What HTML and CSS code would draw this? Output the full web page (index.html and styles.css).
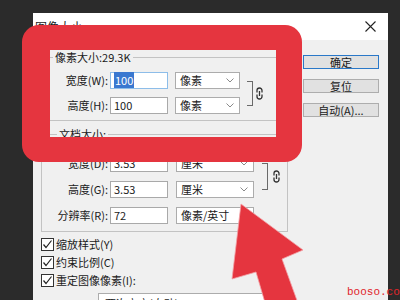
FILE: index.html
```html
<!DOCTYPE html>
<html lang="zh-CN">
<head>
  <meta charset="UTF-8">
  <title>图像大小</title>
  <link rel="stylesheet" href="styles.css">
</head>
<body>
  <div class="screen">
    <div class="dialog">
      <div class="titlebar">
        <span class="title">图像大小</span>
        <svg class="close" width="11" height="11" viewBox="0 0 11 11">
          <path d="M0.5 0.5 L10.5 10.5 M10.5 0.5 L0.5 10.5" stroke="#222" stroke-width="1.1" fill="none"/>
        </svg>
      </div>

      <div class="dialog-body">
        <div class="main">
          <fieldset class="group group-pixels">
            <legend>像素大小:29.3K</legend>
            <div class="rows">
              <label class="label">宽度(W):</label>
              <div class="field focused"><span class="selected">100</span></div>
              <div class="combo">像素
                <svg width="8" height="5" viewBox="0 0 8 5"><polyline points="0.5,0.5 4,4 7.5,0.5" stroke="#8a8a8a" fill="none"/></svg>
              </div>
              <div class="link">
                <div class="bracket"></div>
                <svg class="chain" width="7" height="13" viewBox="0 0 7 13">
                  <path d="M1 5.5 V3.5 a2.5 2.5 0 0 1 5 0 V5.5 M1 7.5 v2 a2.5 2.5 0 0 0 5 0 V7.5 M3.5 4 v5" stroke="#333" stroke-width="1.3" fill="none"/>
                </svg>
              </div>

              <label class="label">高度(H):</label>
              <div class="field">100</div>
              <div class="combo">像素
                <svg width="8" height="5" viewBox="0 0 8 5"><polyline points="0.5,0.5 4,4 7.5,0.5" stroke="#8a8a8a" fill="none"/></svg>
              </div>
            </div>
          </fieldset>

          <fieldset class="group group-doc">
            <legend>文档大小:</legend>
            <div class="rows">
              <label class="label">宽度(D):</label>
              <div class="field">3.53</div>
              <div class="combo">厘米
                <svg width="8" height="5" viewBox="0 0 8 5"><polyline points="0.5,0.5 4,4 7.5,0.5" stroke="#8a8a8a" fill="none"/></svg>
              </div>
              <div class="link">
                <div class="bracket"></div>
                <svg class="chain" width="7" height="13" viewBox="0 0 7 13">
                  <path d="M1 5.5 V3.5 a2.5 2.5 0 0 1 5 0 V5.5 M1 7.5 v2 a2.5 2.5 0 0 0 5 0 V7.5 M3.5 4 v5" stroke="#333" stroke-width="1.3" fill="none"/>
                </svg>
              </div>

              <label class="label">高度(G):</label>
              <div class="field">3.53</div>
              <div class="combo">厘米
                <svg width="8" height="5" viewBox="0 0 8 5"><polyline points="0.5,0.5 4,4 7.5,0.5" stroke="#8a8a8a" fill="none"/></svg>
              </div>

              <label class="label">分辨率(R):</label>
              <div class="field">72</div>
              <div class="combo">像素/英寸</div>
            </div>
          </fieldset>

          <div class="checks">
            <div class="check"><span class="box"><svg width="11" height="11" viewBox="0 0 11 11"><polyline points="1.5,5.5 4,8.5 9.5,1.5" stroke="#222" stroke-width="1.2" fill="none"/></svg></span>缩放样式(Y)</div>
            <div class="check"><span class="box"><svg width="11" height="11" viewBox="0 0 11 11"><polyline points="1.5,5.5 4,8.5 9.5,1.5" stroke="#222" stroke-width="1.2" fill="none"/></svg></span>约束比例(C)</div>
            <div class="check"><span class="box"><svg width="11" height="11" viewBox="0 0 11 11"><polyline points="1.5,5.5 4,8.5 9.5,1.5" stroke="#222" stroke-width="1.2" fill="none"/></svg></span>重定图像像素(I):</div>
          </div>

          <div class="resample">两次立方(自动)</div>
        </div>

        <div class="buttons">
          <div class="btn default">确定</div>
          <div class="btn">复位</div>
          <div class="btn btn-auto">自动(A)...</div>
        </div>
      </div>
    </div>

    <div class="highlight"></div>

    <svg class="arrow" width="400" height="300" viewBox="0 0 400 300">
      <polygon points="241,204 303,250 282,259 299,306 266,306 256,272 232,279" fill="#e5353f" stroke="#f3a0a5" stroke-width="0.8"/>
    </svg>

    <span class="watermark">booso.com</span>
  </div>
</body>
</html>
```

FILE: styles.css
```css
body {
  margin: 0;
  background: #2b2b2b;
  font-family: "Noto Sans CJK SC", "Noto Sans", sans-serif;
  font-size: 11px;
  color: #1a1a1a;
}

.screen {
  position: relative;
  width: 400px;
  height: 300px;
  overflow: hidden;
  box-sizing: border-box;
  padding: 13px 0 0 33px;
  background: #2b2b2b;
}

.dialog {
  width: 355px;
  height: 300px;
  background: #f0f0f0;
}

.titlebar {
  height: 27px;
  background: #fff;
  display: flex;
  align-items: center;
  justify-content: space-between;
  padding: 0 12px 0 2px;
}

.title {
  font-size: 12px;
  line-height: 14px;
}

.dialog-body {
  display: flex;
  padding-left: 8px;
}

.main {
  width: 247px;
  padding-top: 10px;
}

.group {
  margin: 0;
  padding: 8px 0 6px 0;
  border: 1px solid #c3c3c3;
  min-width: 0;
}

.group legend {
  margin-left: 11px;
  padding: 0 2px;
  line-height: 14px;
}

.group-doc {
  margin-top: 6px;
  padding: 14px 0 7px 0;
}

.group-doc legend {
  margin-left: 15px;
}

.rows {
  display: grid;
  grid-template-columns: 68px 65px 65px auto;
  grid-auto-rows: 17px;
  row-gap: 8px;
  align-items: center;
}

.group-doc .rows {
  grid-template-columns: 68px 66px 78px auto;
  row-gap: 9px;
}

.label {
  text-align: right;
  padding-right: 2px;
  line-height: 17px;
}

.field {
  box-sizing: border-box;
  width: 58px;
  height: 17px;
  background: #fff;
  border: 1px solid #a9a9a9;
  padding-left: 3px;
  line-height: 15px;
}

.field.focused {
  border-color: #8dbde9;
}

.selected {
  background: #3a78d0;
  color: #fff;
  padding: 0 1px;
}

.combo {
  box-sizing: border-box;
  height: 17px;
  background: #fff;
  border: 1px solid #acacac;
  padding: 0 5px 0 4px;
  display: flex;
  align-items: center;
  justify-content: space-between;
  line-height: 15px;
}

.link {
  grid-column: 4;
  grid-row: 1 / 3;
  display: flex;
  align-items: center;
  margin-left: 7px;
}

.group-doc .link {
  margin-left: 8px;
}

.bracket {
  width: 6px;
  height: 25px;
  box-sizing: border-box;
  border: 1px solid #6a6a6a;
  border-left: none;
}

.group-doc .bracket {
  height: 27px;
}

.chain {
  margin-left: 3px;
}

.group-doc .chain {
  margin-left: 5px;
}

.checks {
  margin-top: 3px;
}

.check {
  height: 18px;
  display: flex;
  align-items: center;
}

.box {
  box-sizing: border-box;
  width: 13px;
  height: 13px;
  border: 1px solid #333;
  background: #fff;
  margin-right: 2px;
  display: flex;
}

.resample {
  box-sizing: border-box;
  margin: 4px 0 0 57px;
  width: 190px;
  height: 18px;
  border: 1px solid #acacac;
  background: #fff;
  padding-left: 6px;
  line-height: 18px;
}

.buttons {
  width: 76px;
  margin-left: 15px;
  padding-top: 15px;
}

.btn {
  box-sizing: border-box;
  height: 14px;
  border: 1px solid #adadad;
  background: #e1e1e1;
  text-align: center;
  line-height: 12px;
  margin-bottom: 10px;
}

.btn.default {
  border-color: #2a78c8;
}

.btn-auto {
  margin-top: 5px;
}

.highlight {
  position: absolute;
  left: 22px;
  top: 25px;
  width: 280px;
  height: 137px;
  box-sizing: border-box;
  border-style: solid;
  border-color: #e5353f;
  border-width: 25px 26px 25px 28px;
  border-radius: 17px;
}

.arrow {
  position: absolute;
  left: 0;
  top: 0;
}

.watermark {
  position: absolute;
  left: 347px;
  top: 287px;
  font-family: "Liberation Mono", monospace;
  font-size: 11px;
  line-height: 11px;
  color: #e0262c;
}
```
